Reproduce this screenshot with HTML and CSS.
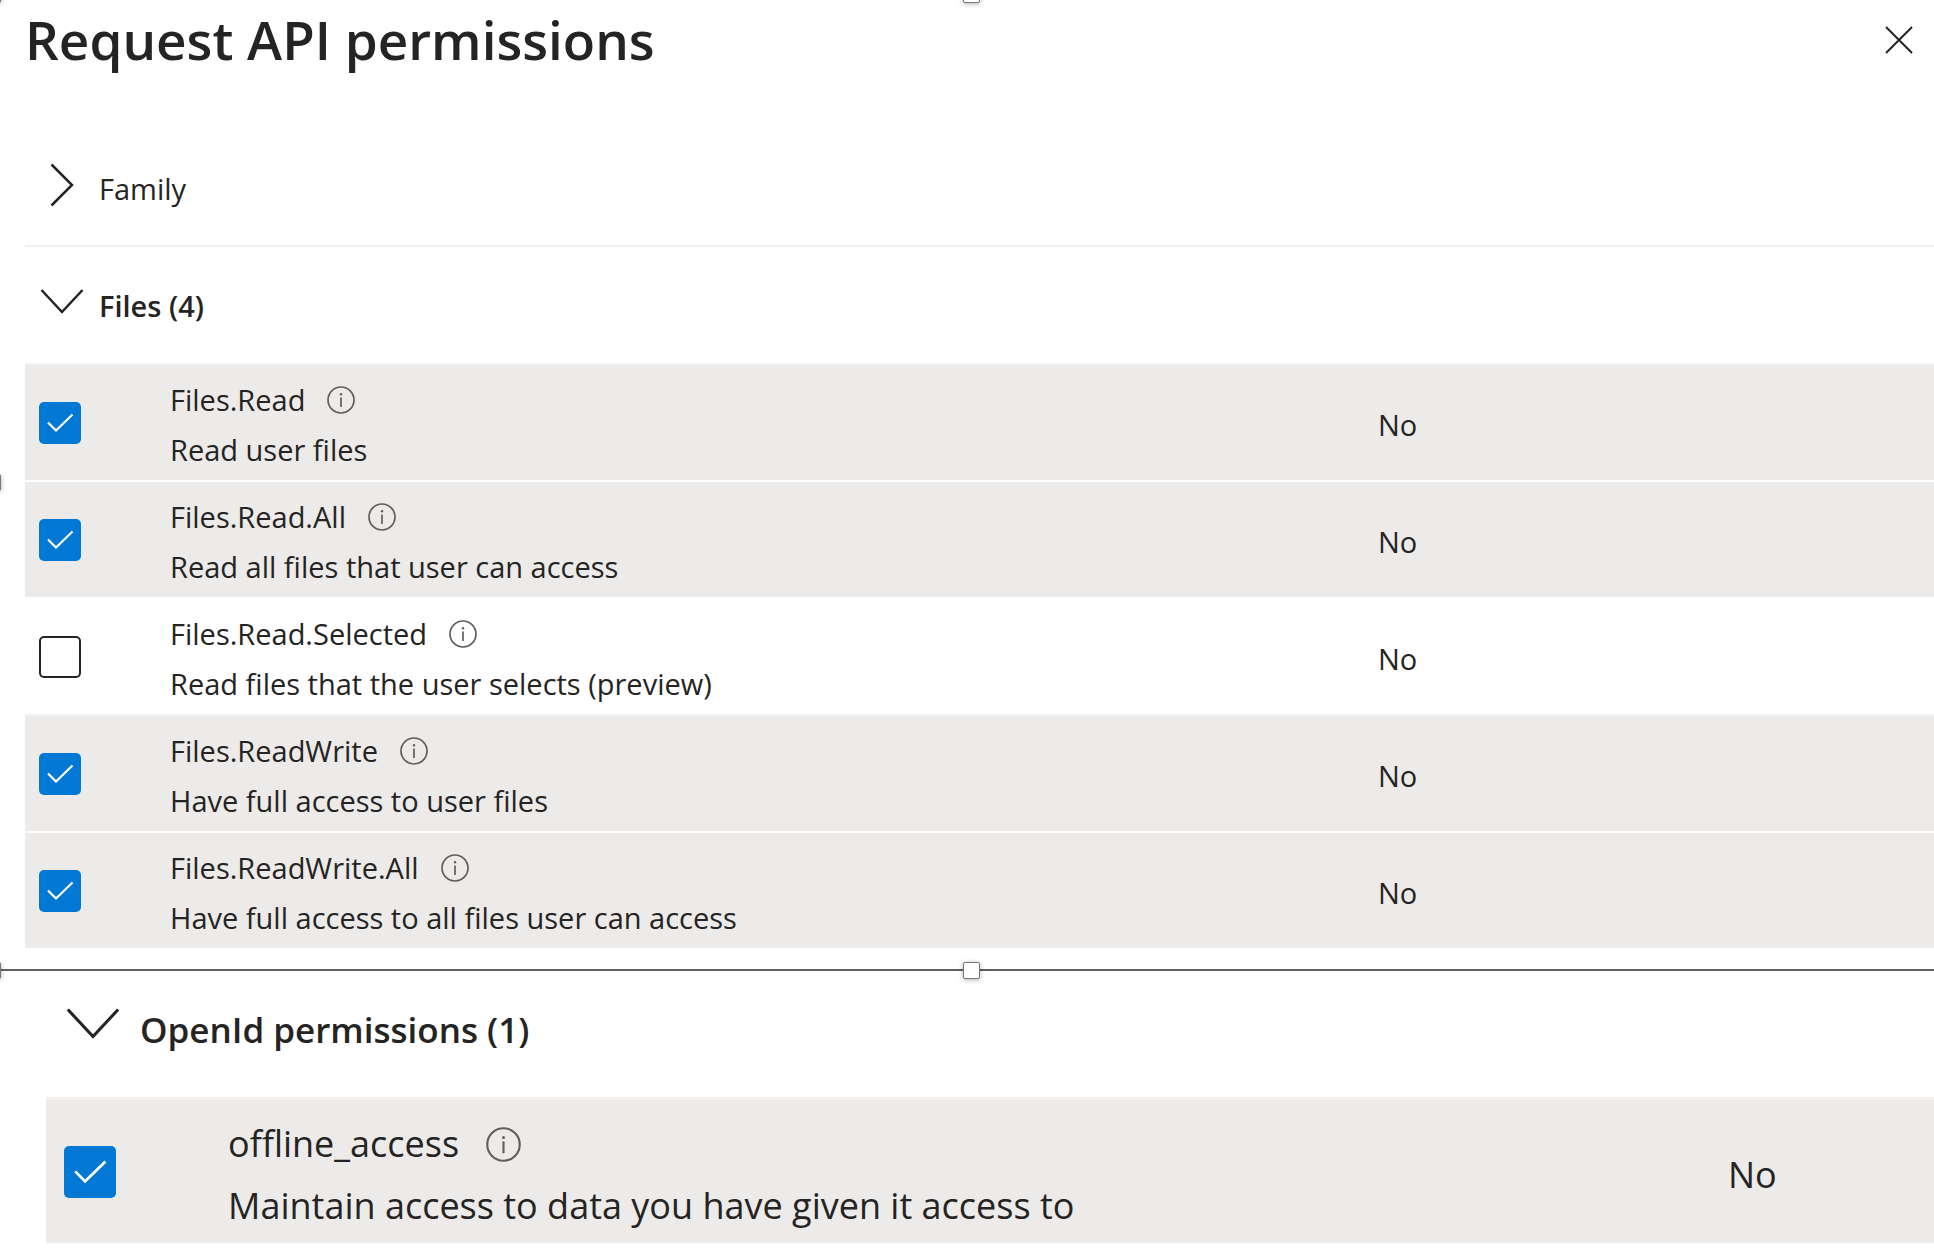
FILE: index.html
```
<!DOCTYPE html>
<html lang="en">
<head>
<meta charset="utf-8">
<meta name="viewport" content="width=device-width, initial-scale=1">
<title>Request API permissions</title>
<link rel="stylesheet" href="styles.css">
</head>
<body>
<svg class="sprite" aria-hidden="true">
  <symbol id="info" viewBox="0 0 28 28"><circle cx="14" cy="14" r="13" fill="none" stroke="currentColor" stroke-width="1.7"/><path d="M14 11.5v9.5" stroke="currentColor" stroke-width="1.7"/><circle cx="14" cy="8.3" r="1.2" fill="currentColor"/></symbol>
  <symbol id="down" viewBox="0 0 44 44"><path d="M1.5 11 22 33 42.500 11" fill="none" stroke="currentColor" stroke-width="2.500"/></symbol>
  <symbol id="right" viewBox="0 0 44 44"><path d="M11.500 1.500 32 22 11.500 42.500" fill="none" stroke="currentColor" stroke-width="2.500"/></symbol>
</svg>
<main>
  <section class="capture">
    <span class="handle handle-top"></span>
    <span class="handle handle-corner"></span>
    <span class="handle handle-side"></span>
    <header class="title-bar">
      <h1>Request API permissions</h1>
      <button class="close" type="button" aria-label="Close"><svg viewBox="0 0 28 28"><path d="M1 1 27 27M27 1 1 27" fill="none" stroke="currentColor" stroke-width="2"/></svg></button>
    </header>
    <div class="groups">
      <button class="group ruled" type="button" aria-expanded="false"><svg><use href="#right"/></svg>Family</button>
      <button class="group open" type="button" aria-expanded="true"><svg><use href="#down"/></svg>Files (4)</button>
      <table class="permissions">
        <tr class="selected">
          <td class="pick"><input type="checkbox" id="read" checked></td>
          <td class="what"><div class="name"><label for="read">Files.Read</label><button class="info" type="button" aria-label="About Files.Read"><svg><use href="#info"/></svg></button></div><div>Read user files</div></td>
          <td class="consent">No</td>
        </tr>
        <tr class="selected">
          <td class="pick"><input type="checkbox" id="read-all" checked></td>
          <td class="what"><div class="name"><label for="read-all">Files.Read.All</label><button class="info" type="button" aria-label="About Files.Read.All"><svg><use href="#info"/></svg></button></div><div>Read all files that user can access</div></td>
          <td class="consent">No</td>
        </tr>
        <tr>
          <td class="pick"><input type="checkbox" id="read-selected"></td>
          <td class="what"><div class="name"><label for="read-selected">Files.Read.Selected</label><button class="info" type="button" aria-label="About Files.Read.Selected"><svg><use href="#info"/></svg></button></div><div>Read files that the user selects (preview)</div></td>
          <td class="consent">No</td>
        </tr>
        <tr class="selected">
          <td class="pick"><input type="checkbox" id="readwrite" checked></td>
          <td class="what"><div class="name"><label for="readwrite">Files.ReadWrite</label><button class="info" type="button" aria-label="About Files.ReadWrite"><svg><use href="#info"/></svg></button></div><div>Have full access to user files</div></td>
          <td class="consent">No</td>
        </tr>
        <tr class="selected">
          <td class="pick"><input type="checkbox" id="readwrite-all" checked></td>
          <td class="what"><div class="name"><label for="readwrite-all">Files.ReadWrite.All</label><button class="info" type="button" aria-label="About Files.ReadWrite.All"><svg><use href="#info"/></svg></button></div><div>Have full access to all files user can access</div></td>
          <td class="consent">No</td>
        </tr>
      </table>
    </div>
    <span class="handle handle-bottom"></span>
    <span class="handle handle-bottom-corner"></span>
  </section>
  <section class="large">
    <button class="group open" type="button" aria-expanded="true"><svg><use href="#down"/></svg>OpenId permissions (1)</button>
    <table class="permissions">
      <tr class="selected">
        <td class="pick"><input type="checkbox" id="offline" checked></td>
        <td class="what"><div class="name"><label for="offline">offline_access</label><button class="info" type="button" aria-label="About offline_access"><svg><use href="#info"/></svg></button></div><div>Maintain access to data you have given it access to</div></td>
        <td class="consent">No</td>
      </tr>
    </table>
  </section>
</main>
</body>
</html>
```
FILE: styles.css
```
* { box-sizing: border-box; }
body {
  margin: 0;
  overflow-x: hidden;
  background: #fff;
  color: #252423;
  font-family: "Open Sans", "Noto Sans", sans-serif;
  font-size: 29px;
}
button {
  padding: 0;
  border: 0;
  background: none;
  color: inherit;
  font: inherit;
  cursor: pointer;
}
svg { display: block; }
.sprite { position: absolute; width: 0; height: 0; }

.capture {
  position: relative;
  padding-bottom: 21px;
  border-bottom: 2px solid #5f5f5f;
}
.title-bar {
  display: flex;
  align-items: center;
  justify-content: space-between;
  padding: 2px 21px 54px 25px;
}
h1 {
  margin: 0;
  font-size: 53px;
  font-weight: 600;
  line-height: 76px;
}
.close svg { width: 28px; height: 28px; }
.groups { padding-left: 25px; }

.group {
  display: flex;
  align-items: center;
  gap: 15px;
  width: 100%;
  height: 115px;
  padding-left: 15px;
  text-align: left;
}
.group svg { width: 44px; height: 44px; margin-bottom: 8px; }
.ruled { border-bottom: 2px solid #f3f2f1; }
.open { height: 116px; font-weight: 600; }

.permissions {
  width: 100%;
  border-collapse: separate;
  border-spacing: 0;
  table-layout: fixed;
  line-height: 50px;
}
td { padding: 0; border-top: 2px solid #f3f2f1; }
.selected td { background: #ecebe9; }
.selected + tr td { border-top-color: #fff; }
.pick { width: 145px; padding-left: 14px; }
.what, .consent { padding-top: 10px; padding-bottom: 5px; }
.consent { width: 556px; }
.name { display: flex; align-items: center; gap: 22px; }
.info { color: #605e5c; }
.info svg { width: 28px; height: 28px; }

input[type="checkbox"] {
  display: block;
  appearance: none;
  width: 42px;
  height: 42px;
  margin: 0;
  border: 2px solid #252423;
  border-radius: 5px;
  background: #fff;
}
input[type="checkbox"]:checked {
  border: 0;
  background: #0078d4 url("data:image/svg+xml,%3Csvg xmlns='http://www.w3.org/2000/svg' viewBox='0 0 42 42'%3E%3Cpath d='M9 20.500 17 28.500 33.500 12.500' fill='none' stroke='white' stroke-width='2.200'/%3E%3C/svg%3E") center / contain no-repeat;
}

.large { padding-left: 46px; font-size: 36px; }
.large .group { height: 126px; padding: 0 0 10px 20px; gap: 20px; font-size: 35px; }
.large .group svg { width: 54px; height: 54px; margin-bottom: 12px; }
.large .permissions { line-height: 62px; }
.large td { border-top-width: 3px; }
.large .pick { width: 182px; padding-left: 18px; }
.large .what, .large .consent { padding-top: 13px; padding-bottom: 6px; }
.large .consent { width: 206px; }
.large .name { gap: 27px; }
.large .info svg { width: 35px; height: 35px; }
.large input[type="checkbox"] { width: 52px; height: 52px; }

/* Resize handles on the edges of the upper capture */
.handle {
  position: absolute;
  width: 17px;
  height: 17px;
  border: 1px solid #767676;
  border-radius: 2px;
  background: #fff;
  box-shadow: 0 1px 5px rgba(0, 0, 0, 0.3);
}
.handle-top { top: -14px; left: calc(50% - 4px); }
.handle-corner { top: -14px; left: -16px; }
.handle-side { top: calc(50% - 11px); left: -16px; }
.handle-bottom { bottom: -10px; left: calc(50% - 4px); }
.handle-bottom-corner { bottom: -10px; left: -16px; }
```
